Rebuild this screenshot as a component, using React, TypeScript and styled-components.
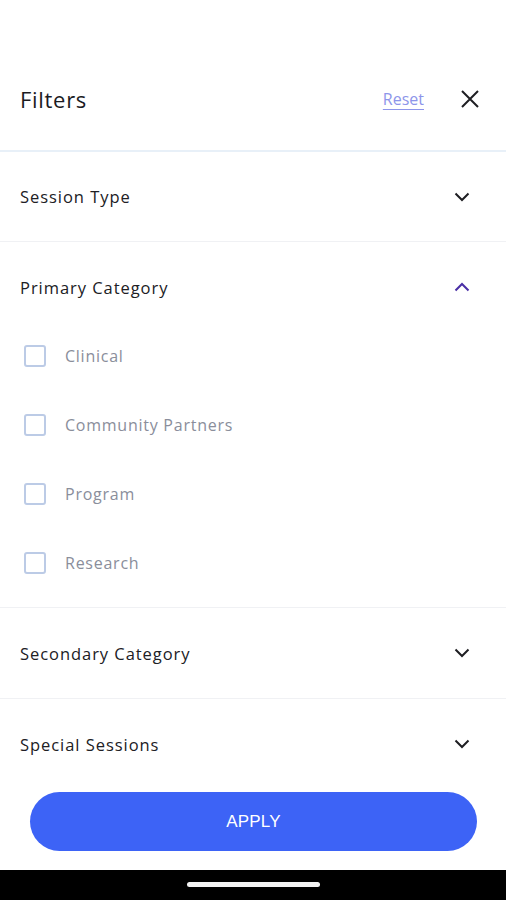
import React, { FC, useState } from "react";
import styled, { createGlobalStyle } from "styled-components";

const GlobalStyle = createGlobalStyle`
  body {
    margin: 0;
    background: #ffffff;
    font-family: "Open Sans", "Liberation Sans", sans-serif;
  }
  * {
    box-sizing: border-box;
  }
`;

const Page = styled.div`
  width: 506px;
  height: 900px;
  display: flex;
  flex-direction: column;
  background: #ffffff;
  overflow: hidden;
`;

const Header = styled.header`
  display: flex;
  align-items: center;
  padding: 84px 26px 36px 20px;
  height: 150px;
`;

const Title = styled.h1`
  flex: 1;
  margin: 0;
  font-size: 22px;
  line-height: 30px;
  font-weight: 400;
  letter-spacing: 0.7px;
  color: #1b1b1f;
`;

const ResetLink = styled.a`
  font-size: 16px;
  color: #8d95ea;
  text-decoration: underline;
  text-underline-offset: 4px;
  margin-right: 36px;
  cursor: pointer;
`;

const IconButton = styled.button`
  display: flex;
  align-items: center;
  justify-content: center;
  padding: 0;
  border: none;
  background: none;
  cursor: pointer;
`;

const HeaderDivider = styled.div`
  height: 2px;
  background: #e8f0f8;
`;

const Content = styled.div`
  flex: 1;
  overflow: hidden;
`;

const Section = styled.section<{ last?: boolean }>`
  border-bottom: ${({ last }) => (last ? "none" : "1px solid #f0f1f4")};
`;

const SectionHeader = styled.div<{ size?: number }>`
  height: ${({ size }) => size || 89}px;
  display: flex;
  align-items: center;
  justify-content: space-between;
  padding: 0 36px 0 20px;
  cursor: pointer;
`;

const SectionTitle = styled.span`
  font-size: 16.5px;
  color: #202024;
  letter-spacing: 0.95px;
`;

const OptionList = styled.ul`
  list-style: none;
  margin: 0;
  padding: 0 0 20px 24px;
  display: flex;
  flex-direction: column;
  gap: 21px;
`;

const Option = styled.li`
  height: 48px;
  display: flex;
  align-items: center;
  gap: 19px;
  cursor: pointer;
`;

const Checkbox = styled.span<{ checked?: boolean }>`
  width: 22px;
  height: 22px;
  border: 2px solid #bccbe6;
  border-radius: 3px;
  background: ${({ checked }) => (checked ? "#3d63f6" : "#ffffff")};
`;

const OptionLabel = styled.span`
  font-size: 16px;
  color: #8a8e9b;
  letter-spacing: 0.75px;
`;

const Footer = styled.div`
  padding: 3px 29px 19px 30px;
`;

const ApplyButton = styled.button`
  width: 100%;
  height: 59px;
  border: none;
  border-radius: 30px;
  background: #3d63f6;
  color: #ffffff;
  font-family: "Liberation Sans", Arial, sans-serif;
  font-size: 17px;
  letter-spacing: 0.2px;
  cursor: pointer;
`;

const NavBar = styled.div`
  height: 30px;
  background: #000000;
  display: flex;
  justify-content: center;
  padding-top: 12px;
`;

const NavHandle = styled.div`
  width: 133px;
  height: 5px;
  border-radius: 3px;
  background: #f2f2f2;
`;

const Chevron: FC<{ up?: boolean }> = ({ up }) => (
  <svg width="16" height="10" viewBox="0 0 16 10">
    <path
      d={up ? "M1.5 8.5 L8 2 L14.5 8.5" : "M1.5 1.5 L8 8 L14.5 1.5"}
      fill="none"
      stroke={up ? "#4a2fa6" : "#1e1e22"}
      strokeWidth="2"
    />
  </svg>
);

const CloseIcon = () => (
  <svg width="20" height="20" viewBox="0 0 20 20">
    <path d="M2 2 L18 18 M18 2 L2 18" stroke="#1e1e22" strokeWidth="2" />
  </svg>
);

const sections = [
  { title: "Session Type", options: [] as string[] },
  {
    title: "Primary Category",
    options: ["Clinical", "Community Partners", "Program", "Research"],
  },
  { title: "Secondary Category", options: [] as string[] },
  { title: "Special Sessions", options: [] as string[] },
];

const App: FC = () => {
  const [open, setOpen] = useState<number>(1);
  const [checked, setChecked] = useState<string[]>([]);

  const toggle = (item: string) => {
    setChecked((prev) =>
      prev.includes(item) ? prev.filter((i) => i !== item) : [...prev, item]
    );
  };

  return (
    <>
      <GlobalStyle />
      <Page>
        <Header>
          <Title>Filters</Title>
          <ResetLink onClick={() => setChecked([])}>Reset</ResetLink>
          <IconButton>
            <CloseIcon />
          </IconButton>
        </Header>
        <HeaderDivider />
        <Content>
          {sections.map((section, index) => {
            const isOpen = open === index;
            return (
              <Section key={section.title} last={index === sections.length - 1}>
                <SectionHeader
                  size={index === 0 ? 89 : 90}
                  onClick={() => setOpen(isOpen ? -1 : index)}
                >
                  <SectionTitle>{section.title}</SectionTitle>
                  <Chevron up={isOpen} />
                </SectionHeader>
                {isOpen && section.options.length > 0 && (
                  <OptionList>
                    {section.options.map((option) => (
                      <Option key={option} onClick={() => toggle(option)}>
                        <Checkbox checked={checked.includes(option)} />
                        <OptionLabel>{option}</OptionLabel>
                      </Option>
                    ))}
                  </OptionList>
                )}
              </Section>
            );
          })}
        </Content>
        <Footer>
          <ApplyButton>APPLY</ApplyButton>
        </Footer>
        <NavBar>
          <NavHandle />
        </NavBar>
      </Page>
    </>
  );
};

export default App;
